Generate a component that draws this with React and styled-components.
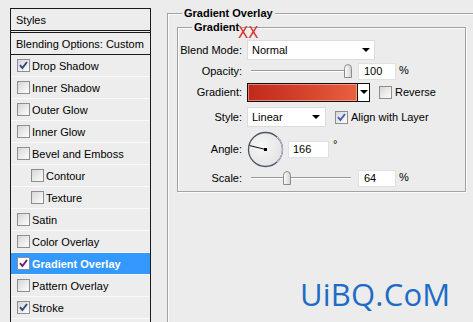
import React from 'react';
import styled, { createGlobalStyle } from 'styled-components';

const Global = createGlobalStyle`
  html, body { margin: 0; padding: 0; }
  body {
    background: #ececec;
    width: 473px;
    height: 322px;
    overflow: hidden;
    font-family: Tahoma, "Liberation Sans", Arial, sans-serif;
    font-size: 11px;
    color: #000;
  }
`;

const Page = styled.div`
  position: relative;
  display: flex;
  align-items: flex-start;
  width: 473px;
  height: 322px;
  overflow: hidden;
  padding: 8px 0 0 10px;
  box-sizing: border-box;
`;

/* ---------- left styles list ---------- */
const StylesPanel = styled.div`
  flex: none;
  width: 139px;
  height: 330px;
  border: 1px solid #1a1a1a;
  border-bottom: none;
  background: #ededed;
`;

const PanelHeader = styled.div`
  height: 21px;
  display: flex;
  align-items: center;
  padding-left: 5px;
  border-bottom: 3px double #1a1a1a;
`;

const BlendingRow = styled.div`
  height: 21px;
  display: flex;
  align-items: center;
  padding-left: 5px;
  border-bottom: 1px solid #1a1a1a;
`;

const StyleItem = styled.div`
  height: 21px;
  display: flex;
  align-items: center;
  gap: 2px;
  padding-left: ${(p) => (p.$indent ? 20 : 6)}px;
  border-bottom: 1px solid #f9f9f9;
  background: ${(p) => (p.$active ? '#3399ff' : 'transparent')};
  color: ${(p) => (p.$active ? '#fff' : '#000')};
  font-weight: ${(p) => (p.$active ? 'bold' : 'normal')};
`;

const Box = styled.span`
  flex: none;
  position: relative;
  width: 11px;
  height: 11px;
  border: 1px solid #8e8e8e;
  background: ${(p) => (p.$white ? '#fff' : 'linear-gradient(135deg, #d6d6d6 0%, #f2f2f2 70%, #fbfbfb 100%)')};
  display: inline-flex;
  align-items: center;
  justify-content: center;
`;

const CheckBox = ({ checked, color = '#33457f', white }) => (
  <Box $white={white}>
    {checked && (
      <svg width="9" height="9" viewBox="0 0 9 9">
        <path d="M1 4.2 L3.4 7 L8 1" fill="none" stroke={color} strokeWidth="1.9" />
      </svg>
    )}
  </Box>
);

/* ---------- right settings area ---------- */
const Main = styled.div`
  position: relative;
  flex: none;
  width: 330px;
  height: 330px;
  margin: 5px 0 0 16px;
  padding: 13px 0 0 9px;
  box-sizing: border-box;
  border-top: 1px solid #a3a3a3;
  border-left: 1px solid #a3a3a3;
  box-shadow: inset 1px 1px 0 #fbfbfb;
`;

const Legend = styled.span`
  position: absolute;
  top: -8px;
  left: 14px;
  padding: 0 2px;
  background: #ececec;
  font-weight: bold;
  line-height: 14px;
`;

const Group = styled.div`
  position: relative;
  width: 289px;
  height: 165px;
  padding-top: 12px;
  box-sizing: border-box;
  border: 1px solid #a3a3a3;
  box-shadow: inset 1px 1px 0 #fbfbfb, 1px 1px 0 #fbfbfb;
`;

const Row = styled.div`
  display: flex;
  align-items: center;
  height: ${(p) => p.$h}px;
  margin-top: ${(p) => p.$mt || 0}px;
`;

const Label = styled.span`
  flex: none;
  width: 64px;
  margin-right: 5px;
  text-align: right;
`;

const Select = styled.div`
  flex: none;
  width: ${(p) => p.$w}px;
  height: 20px;
  box-sizing: border-box;
  display: flex;
  align-items: center;
  justify-content: space-between;
  padding: 0 ${(p) => p.$pr}px 0 4px;
  background: #fff;
  border: 1px solid #dcdcdc;
`;

const Arrow = styled.span`
  width: 0;
  height: 0;
  border-left: 4px solid transparent;
  border-right: 4px solid transparent;
  border-top: 4px solid #000;
`;

const Slider = styled.div`
  position: relative;
  flex: none;
  width: 100px;
  height: 16px;
  margin-left: 4px;
`;

const Track = styled.div`
  position: absolute;
  left: 0;
  right: 0;
  top: 7px;
  height: 1px;
  background: #9a9a9a;
  box-shadow: 0 1px 0 #ffffff;
`;

const Thumb = styled.svg`
  position: absolute;
  top: 1px;
`;

const NumField = styled.div`
  flex: none;
  width: ${(p) => p.$w}px;
  height: 17px;
  box-sizing: border-box;
  margin-left: ${(p) => p.$ml}px;
  padding-left: ${(p) => p.$pl}px;
  display: flex;
  align-items: center;
  background: #fff;
  border: 1px solid #e0e0e0;
`;

const Unit = styled.span`
  margin-left: 3px;
  margin-bottom: 2px;
`;

const Degree = styled.span`
  align-self: flex-start;
  margin: 6px 0 0 4px;
`;

const Swatch = styled.div`
  flex: none;
  width: 111px;
  height: 19px;
  box-sizing: border-box;
  border: 1px solid #111;
  background: linear-gradient(to right, #c02a1d 0%, #d23f2a 45%, #e9603f 100%);
  box-shadow: inset 0 0 0 1px rgba(255, 215, 200, 0.5);
`;

const SwatchDrop = styled.div`
  flex: none;
  width: 12px;
  height: 19px;
  box-sizing: border-box;
  border: 1px solid #111;
  border-left: none;
  background: #fff;
  display: flex;
  align-items: center;
  justify-content: center;
`;

const Check = styled.label`
  display: flex;
  align-items: center;
  gap: ${(p) => p.$gap}px;
  margin-left: ${(p) => p.$ml}px;
`;

const Dial = styled.svg`
  flex: none;
  display: block;
`;

const Watermark = styled.div`
  position: absolute;
  left: 300px;
  top: 276px;
  font-family: "Open Sans", "Liberation Sans", sans-serif;
  font-size: 31px;
  line-height: 1.2;
  color: #1d6cc6;
  letter-spacing: 0.2px;
`;

const RedMark = styled.div`
  position: absolute;
  left: 238px;
  top: 25px;
  font-family: "DejaVu Sans", sans-serif;
  font-size: 15px;
  line-height: 16px;
  color: #d6322a;
`;

const items = [
  { name: 'Drop Shadow', checked: true },
  { name: 'Inner Shadow' },
  { name: 'Outer Glow' },
  { name: 'Inner Glow' },
  { name: 'Bevel and Emboss' },
  { name: 'Contour', indent: true },
  { name: 'Texture', indent: true },
  { name: 'Satin' },
  { name: 'Color Overlay' },
  { name: 'Gradient Overlay', checked: true, active: true },
  { name: 'Pattern Overlay' },
  { name: 'Stroke', checked: true },
];

const SliderThumb = ({ left }) => (
  <Thumb width="10" height="14" viewBox="0 0 10 14" style={{ left }}>
    <defs>
      <linearGradient id="tg" x1="0" y1="0" x2="1" y2="0">
        <stop offset="0" stopColor="#fdfdfd" />
        <stop offset="1" stopColor="#d2d2d2" />
      </linearGradient>
    </defs>
    <path d="M1.5 13.5 V4.5 Q1.5 0.5 5 0.5 Q8.5 0.5 8.5 4.5 V13.5 Z" fill="url(#tg)" stroke="#8a8a8a" />
  </Thumb>
);

export default function App() {
  const angle = 166;
  const rad = (angle * Math.PI) / 180;
  const c = 18.5;
  const ex = c + 16.5 * Math.cos(rad);
  const ey = c - 16.5 * Math.sin(rad);

  return (
    <>
      <Global />
      <Page>
        <StylesPanel>
          <PanelHeader>Styles</PanelHeader>
          <BlendingRow>Blending Options: Custom</BlendingRow>
          {items.map((it) => (
            <StyleItem key={it.name} $indent={it.indent} $active={it.active}>
              <CheckBox
                checked={it.checked}
                white={it.active}
                color={it.active ? '#6a1f6e' : '#33457f'}
              />
              <span>{it.name}</span>
            </StyleItem>
          ))}
        </StylesPanel>

        <Main>
          <Legend>Gradient Overlay</Legend>
          <Group>
            <Legend>Gradient</Legend>
            <Row $h={20}>
              <Label>Blend Mode:</Label>
              <Select $w={128} $pr={4}>
                <span>Normal</span>
                <Arrow />
              </Select>
            </Row>
            <Row $h={18} $mt={2}>
              <Label>Opacity:</Label>
              <Slider>
                <Track />
                <SliderThumb left={92} />
              </Slider>
              <NumField $w={38} $ml={7} $pl={5}>100</NumField>
              <Unit>%</Unit>
            </Row>
            <Row $h={20} $mt={2}>
              <Label>Gradient:</Label>
              <Swatch />
              <SwatchDrop>
                <Arrow />
              </SwatchDrop>
              <Check $ml={9} $gap={3}>
                <CheckBox />
                <span>Reverse</span>
              </Check>
            </Row>
            <Row $h={20} $mt={5}>
              <Label>Style:</Label>
              <Select $w={79} $pr={5}>
                <span>Linear</span>
                <Arrow />
              </Select>
              <Check $ml={9} $gap={3}>
                <CheckBox checked color="#3d5fb5" />
                <span>Align with Layer</span>
              </Check>
            </Row>
            <Row $h={34} $mt={5}>
              <Label>Angle:</Label>
              <Dial width="37" height="37" viewBox="0 0 37 37">
                <defs>
                  <radialGradient id="dg" cx="0.4" cy="0.4" r="0.7">
                    <stop offset="0" stopColor="#f7f7f7" />
                    <stop offset="1" stopColor="#e2e2e2" />
                  </radialGradient>
                </defs>
                <circle cx={c} cy={c} r="17" fill="url(#dg)" stroke="#4c5568" strokeWidth="1.3" />
                <path d="M30 6 A17 17 0 0 1 30 31" fill="none" stroke="#c8ccd4" strokeWidth="1" />
                <line x1={c} y1={c} x2={ex} y2={ey} stroke="#111" strokeWidth="1" />
                <rect x={c - 1.5} y={c - 1.5} width="3" height="3" fill="#000" />
              </Dial>
              <NumField $w={41} $ml={4} $pl={4}>166</NumField>
              <Degree>°</Degree>
            </Row>
            <Row $h={18} $mt={3}>
              <Label>Scale:</Label>
              <Slider>
                <Track />
                <SliderThumb left={31} />
              </Slider>
              <NumField $w={38} $ml={7} $pl={5}>64</NumField>
              <Unit>%</Unit>
            </Row>
          </Group>
        </Main>

        <RedMark>XX</RedMark>
        <Watermark>UiBQ.CoM</Watermark>
      </Page>
    </>
  );
}
